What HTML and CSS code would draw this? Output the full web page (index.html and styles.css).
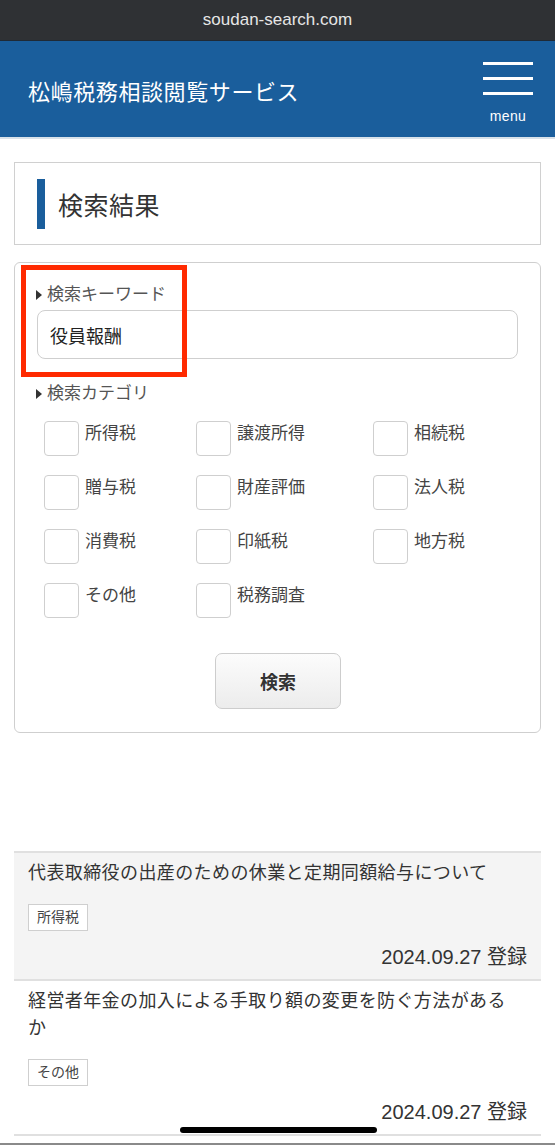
FILE: index.html
```html
<!DOCTYPE html>
<html lang="ja">

<head>
    <meta charset="UTF-8">
    <meta name="viewport" content="width=device-width, initial-scale=1.0">
    <title>検索結果 | 松嶋税務相談閲覧サービス</title>
    <link rel="stylesheet" href="styles.css">
</head>

<body>
    <div class="urlbar">soudan-search.com</div>

    <header class="site-header">
        <h1 class="site-title">松嶋税務相談閲覧サービス</h1>
        <button class="menu-button">
            <span class="menu-lines">
                <span></span><span></span><span></span>
            </span>
            <span class="menu-text">menu</span>
        </button>
    </header>

    <main class="content">
        <div class="page-title">
            <span class="page-title-bar"></span>
            <h2>検索結果</h2>
        </div>

        <form class="search-box" onsubmit="return false;">
            <p class="field-label">検索キーワード</p>
            <input type="text" class="keyword" value="役員報酬">

            <p class="field-label">検索カテゴリ</p>
            <div class="category-grid">
                <label class="category"><input type="checkbox"><span>所得税</span></label>
                <label class="category"><input type="checkbox"><span>譲渡所得</span></label>
                <label class="category"><input type="checkbox"><span>相続税</span></label>
                <label class="category"><input type="checkbox"><span>贈与税</span></label>
                <label class="category"><input type="checkbox"><span>財産評価</span></label>
                <label class="category"><input type="checkbox"><span>法人税</span></label>
                <label class="category"><input type="checkbox"><span>消費税</span></label>
                <label class="category"><input type="checkbox"><span>印紙税</span></label>
                <label class="category"><input type="checkbox"><span>地方税</span></label>
                <label class="category"><input type="checkbox"><span>その他</span></label>
                <label class="category"><input type="checkbox"><span>税務調査</span></label>
            </div>

            <div class="search-actions">
                <button type="submit" class="search-button">検索</button>
            </div>
        </form>

        <ul class="result-list">
            <li class="result shaded">
                <p class="result-title">代表取締役の出産のための休業と定期同額給与について</p>
                <span class="tag">所得税</span>
                <p class="result-date">2024.09.27 登録</p>
            </li>
            <li class="result">
                <p class="result-title">経営者年金の加入による手取り額の変更を防ぐ方法があるか</p>
                <span class="tag">その他</span>
                <p class="result-date">2024.09.27 登録</p>
            </li>
        </ul>
    </main>

    <div class="highlight"></div>
    <div class="home-indicator"></div>
    <div class="bottom-edge"></div>
</body>

</html>
```

FILE: styles.css
```css
body {
    font-family: "Liberation Sans", "Noto Sans CJK JP", sans-serif;
    margin: 0;
    background-color: #fff;
    color: #333;
    position: relative;
    min-height: 1145px;
    overflow: hidden;
}

p,
h1,
h2,
ul {
    margin: 0;
    padding: 0;
}

.urlbar {
    height: 40px;
    line-height: 40px;
    background-color: #2f3134;
    color: #e6e6e6;
    text-align: center;
    font-size: 17px;
    border-bottom: 1px solid #1f2a36;
}

.site-header {
    height: 96px;
    background-color: #1a5e9c;
    display: flex;
    align-items: center;
    justify-content: space-between;
    padding: 0 22px 0 28px;
    border-bottom: 2px solid #d9e2ea;
}

.site-title {
    color: #fff;
    font-size: 22px;
    font-weight: normal;
    letter-spacing: 0.6px;
    margin-top: 2px;
}

.menu-button {
    background: none;
    border: none;
    padding: 0;
    display: flex;
    flex-direction: column;
    align-items: center;
    margin-top: 8px;
    cursor: pointer;
}

.menu-lines {
    display: flex;
    flex-direction: column;
    gap: 12px;
    width: 50px;
}

.menu-lines span {
    display: block;
    height: 3px;
    background-color: #fff;
}

.menu-text {
    color: #fff;
    font-size: 14px;
    margin-top: 13px;
    letter-spacing: 0.4px;
}

.content {
    padding: 0 14px;
}

.page-title {
    margin-top: 23px;
    height: 81px;
    border: 1px solid #d0d0d0;
    display: flex;
    align-items: center;
    padding-left: 22px;
    gap: 13px;
}

.page-title-bar {
    width: 8px;
    height: 50px;
    background-color: #1a5e9c;
}

.page-title h2 {
    font-size: 25px;
    font-weight: normal;
    letter-spacing: 0.5px;
    color: #333;
}

.search-box {
    margin-top: 17px;
    border: 1px solid #cfcfcf;
    border-radius: 6px;
    padding: 20px 23px 23px 21px;
    margin-bottom: 0;
}

.field-label {
    font-size: 17px;
    color: #555;
    line-height: 24px;
    display: flex;
    align-items: center;
}

.field-label::before {
    content: '';
    border-left: 6px solid #333;
    border-top: 5px solid transparent;
    border-bottom: 5px solid transparent;
    margin-right: 5px;
}

.keyword {
    display: block;
    box-sizing: border-box;
    width: 100%;
    height: 49px;
    margin: 3px 0 23px 1px;
    border: 1px solid #cfcfcf;
    border-radius: 8px;
    padding: 0 12px;
    font-family: inherit;
    font-size: 18px;
    color: #222;
    background-color: #fff;
}

.category-grid {
    display: grid;
    grid-template-columns: 152px 177px auto;
    row-gap: 19px;
    margin: 15px 0 0 8px;
}

.category {
    display: flex;
    align-items: flex-start;
    gap: 6px;
    font-size: 17px;
    color: #444;
}

.category input {
    appearance: none;
    -webkit-appearance: none;
    width: 35px;
    height: 35px;
    margin: 0;
    border: 1px solid #cfcfcf;
    border-radius: 4px;
    background-color: #fff;
}

.category span {
    line-height: 26px;
    margin-top: 0;
}

.search-actions {
    display: flex;
    justify-content: center;
    margin-top: 35px;
}

.search-button {
    width: 126px;
    height: 56px;
    margin-left: 3px;
    border: 1px solid #cdcdcd;
    border-radius: 7px;
    background: linear-gradient(#fcfcfc, #ececec);
    font-family: inherit;
    font-size: 18px;
    font-weight: bold;
    color: #333;
}

.result-list {
    list-style: none;
    margin-top: 118px;
    border-top: 2px solid #e0e0e0;
}

.result {
    padding: 7px 20px 9px 14px;
    border-bottom: 2px solid #e0e0e0;
}

.result.shaded {
    background-color: #f4f4f4;
}

.result-title {
    font-size: 18px;
    line-height: 27px;
    letter-spacing: 0.4px;
    color: #333;
}

.tag {
    display: inline-block;
    margin-top: 17px;
    padding: 0 8px;
    height: 25px;
    line-height: 25px;
    border: 1px solid #cfcfcf;
    background-color: #fff;
    font-size: 14px;
    color: #444;
}

.result-date {
    text-align: right;
    margin: 13px -6px 0 0;
    font-size: 20px;
    line-height: 26px;
    color: #333;
}

/* annotation + device chrome laid over the page */
.highlight {
    position: absolute;
    left: 21px;
    top: 265px;
    width: 156px;
    height: 102px;
    border: 5px solid #ff2a00;
}

.home-indicator {
    position: absolute;
    left: 180px;
    top: 1127px;
    width: 197px;
    height: 6px;
    border-radius: 3px;
    background-color: #000;
}

.bottom-edge {
    position: absolute;
    left: 0;
    right: 0;
    bottom: 0;
    height: 2px;
    background-color: #8a8a8a;
}
```
